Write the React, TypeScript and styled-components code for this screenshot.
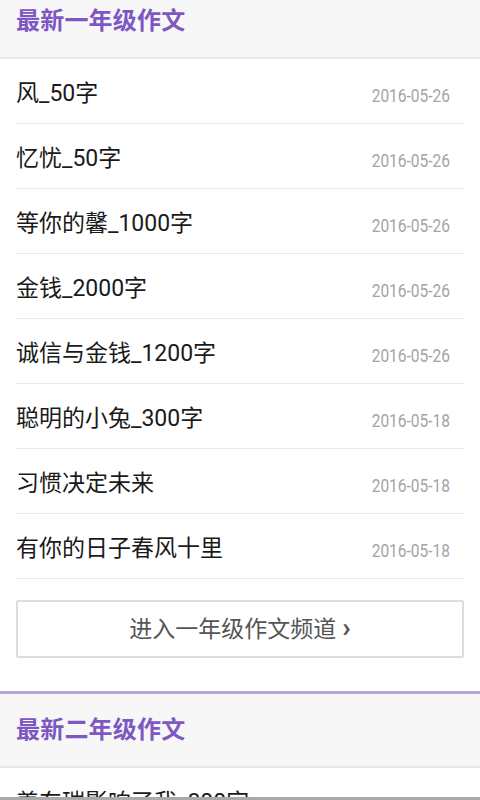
import React from "react";
import styled, { createGlobalStyle } from "styled-components";

interface Essay {
	title: string;
	date: string;
}

interface SectionData {
	heading: string;
	more?: string;
	items: Essay[];
}

const GlobalStyle = createGlobalStyle`
	html, body {
		margin: 0;
		padding: 0;
		background: #ffffff;
		font-family: Roboto, "Noto Sans CJK SC", "Noto Sans", sans-serif;
		overflow: hidden;
	}
`;

const Page = styled.div`
	/* page is scrolled a little in the screenshot */
	margin-top: -18px;
	height: 818px;
	overflow: hidden;
`;

const Section = styled.section`
	border-top: 3px solid #b7a2de;
`;

const SectionHeader = styled.header`
	height: 72px;
	display: flex;
	align-items: center;
	padding: 0 16px 6px;
	box-sizing: border-box;
	background: #f7f7f7;
	border-bottom: 2px solid #e6e6e6;
	height: 74px;
`;

const SectionTitle = styled.h2`
	margin: 0;
	font-size: 24px;
	font-weight: 700;
	color: #7e57c2;
	letter-spacing: 0.2px;
`;

const List = styled.ul`
	list-style: none;
	margin: 0;
	padding: 0 16px;
`;

const Row = styled.li`
	display: flex;
	align-items: baseline;
	justify-content: space-between;
	padding: 15px 14px 0 0;
	box-sizing: border-box;
	border-bottom: 1px solid #e8e8e8;
	height: 65px;
`;

const RowTitle = styled.span`
	font-size: 23px;
	color: #1a1a1a;
	white-space: nowrap;
`;

const RowDate = styled.span`
	display: inline-block;
	font-size: 18px;
	color: #a4a4a4;
	transform: scaleX(0.86) translateY(1px);
	transform-origin: right center;
`;

const MoreButton = styled.button`
	display: block;
	box-sizing: border-box;
	width: calc(100% - 32px);
	height: 58px;
	margin: 21px 16px 33px;
	background: #ffffff;
	border: 2px solid #dddddd;
	border-radius: 2px;
	font-family: Roboto, "Noto Sans CJK SC", sans-serif;
	font-size: 23px;
	color: #555555;
	padding: 0 0 4px;
`;

const Chevron = styled.span`
	font-size: 28px;
	font-weight: 700;
	margin-left: 6px;
`;

const BottomEdge = styled.div`
	position: fixed;
	left: 0;
	right: 0;
	bottom: 0;
	height: 3px;
	background: #a9a9a9;
`;

const sections: SectionData[] = [
	{
		heading: "最新一年级作文",
		more: "进入一年级作文频道",
		items: [
			{ title: "风_50字", date: "2016-05-26" },
			{ title: "忆忧_50字", date: "2016-05-26" },
			{ title: "等你的馨_1000字", date: "2016-05-26" },
			{ title: "金钱_2000字", date: "2016-05-26" },
			{ title: "诚信与金钱_1200字", date: "2016-05-26" },
			{ title: "聪明的小兔_300字", date: "2016-05-18" },
			{ title: "习惯决定未来", date: "2016-05-18" },
			{ title: "有你的日子春风十里", date: "2016-05-18" },
		],
	},
	{
		heading: "最新二年级作文",
		items: [{ title: "姜东瑞影响了我_800字", date: "2016-05-26" }],
	},
];

const App: React.FC = () => {
	return (
		<>
			<GlobalStyle />
			<Page>
				{sections.map((s) => (
					<Section key={s.heading}>
						<SectionHeader>
							<SectionTitle>{s.heading}</SectionTitle>
						</SectionHeader>
						<List>
							{s.items.map((it) => (
								<Row key={it.title}>
									<RowTitle>{it.title}</RowTitle>
									<RowDate>{it.date}</RowDate>
								</Row>
							))}
						</List>
						{s.more && (
							<MoreButton>
								{s.more}
								<Chevron>›</Chevron>
							</MoreButton>
						)}
					</Section>
				))}
			</Page>
			<BottomEdge />
		</>
	);
};

export default App;
